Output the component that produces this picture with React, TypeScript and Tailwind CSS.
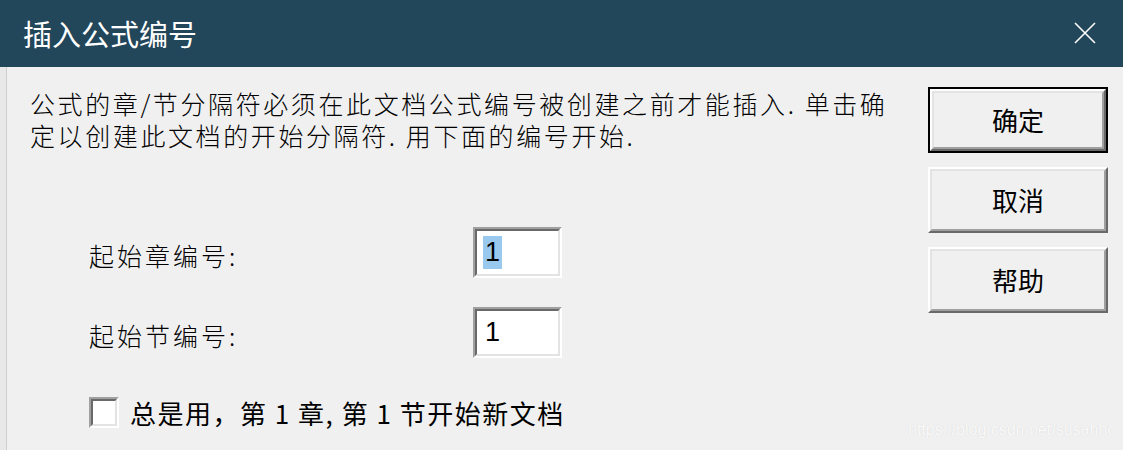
const cjk = "font-['Noto_Sans_CJK_SC','Noto_Sans',sans-serif]";

function RaisedButton({ label, isDefault }: { label: string; isDefault?: boolean }) {
  const face = (
    <div className="flex h-full w-full border-2 border-t-white border-l-white border-r-[#696969] border-b-[#696969]">
      <div className="flex h-full w-full items-center justify-center border-2 border-t-[#e3e3e3] border-l-[#e3e3e3] border-r-[#a0a0a0] border-b-[#a0a0a0] bg-[#f0f0f0]">
        <span className={`${cjk} text-[26px] leading-none text-black`}>{label}</span>
      </div>
    </div>
  );
  if (isDefault) {
    return <div className="h-[66px] w-[180px] border-2 border-black">{face}</div>;
  }
  return <div className="h-[66px] w-[180px]">{face}</div>;
}

function Sunken({ className, children }: { className: string; children?: React.ReactNode }) {
  return (
    <div className={`${className} border-2 border-t-[#a0a0a0] border-l-[#a0a0a0] border-r-white border-b-white`}>
      <div className="flex h-full w-full items-center border-2 border-t-[#696969] border-l-[#696969] border-r-[#e3e3e3] border-b-[#e3e3e3] bg-white">
        {children}
      </div>
    </div>
  );
}

function NumberRow({ label, selected }: { label: string; selected?: boolean }) {
  return (
    <div className="flex items-center">
      <div className={`${cjk} w-[384px] pt-[6px] text-[25px] font-light tracking-[3px] text-black`}>{label}</div>
      <Sunken className="h-[51px] w-[89px]">
        <span
          className={`ml-[6px] px-[2px] font-['Liberation_Sans',sans-serif] text-[27px] leading-[33px] text-black ${selected ? 'bg-[#99c9ef]' : ''}`}
        >
          1
        </span>
      </Sunken>
    </div>
  );
}

export default function App() {
  return (
    <div className="relative h-[450px] w-[1123px] overflow-hidden bg-[#f0f0f0]">
      {/* title bar */}
      <div className="flex h-[67px] items-center justify-between bg-[#22465a] pl-[23px] pr-[27px]">
        <span className={`${cjk} text-[29px] leading-none text-white`}>插入公式编号</span>
        <svg width="22" height="22" viewBox="0 0 22 22" className="mb-[2px]">
          <path d="M1 1 L21 21 M21 1 L1 21" stroke="#ffffff" strokeWidth="1.6" fill="none" />
        </svg>
      </div>

      <div className="flex h-[383px]">
        <div className="w-[7px] shrink-0 border-r border-[#cfcfcf] bg-[#e8e8e8]" />

        <div className="flex min-w-0 flex-1 flex-col">
          <p
            className={`${cjk} ml-[23px] mt-[20px] whitespace-nowrap text-[25px] font-light leading-[32px] tracking-[2.6px] text-black`}
          >
            公式的章/节分隔符必须在此文档公式编号被创建之前才能插入. 单击确
            <br />
            定以创建此文档的开始分隔符. 用下面的编号开始.
          </p>

          <div className="ml-[82px] mt-[76px] flex flex-col gap-[29px]">
            <NumberRow label="起始章编号:" selected />
            <NumberRow label="起始节编号:" />
          </div>

          <div className="ml-[82px] mt-[39px] flex items-center gap-[11px]">
            <Sunken className="h-[31px] w-[30px]" />
            <span className={`${cjk} whitespace-pre text-[26px] leading-none tracking-[1.5px] text-black`}>
              总是用，第 1 章, 第 1 节开始新文档
            </span>
          </div>
        </div>

        <div className="mr-[15px] mt-[20px] flex shrink-0 flex-col gap-[14px]">
          <RaisedButton label="确定" isDefault />
          <RaisedButton label="取消" />
          <RaisedButton label="帮助" />
        </div>
      </div>

      {/* watermark */}
      <div className="absolute left-[908px] top-[422px] font-['Liberation_Sans',sans-serif] text-[16px] leading-none text-[#fafafa] [text-shadow:0_0_1px_#d0d0d0]">
        https://blog.csdn.net/susanhc
      </div>
    </div>
  );
}
